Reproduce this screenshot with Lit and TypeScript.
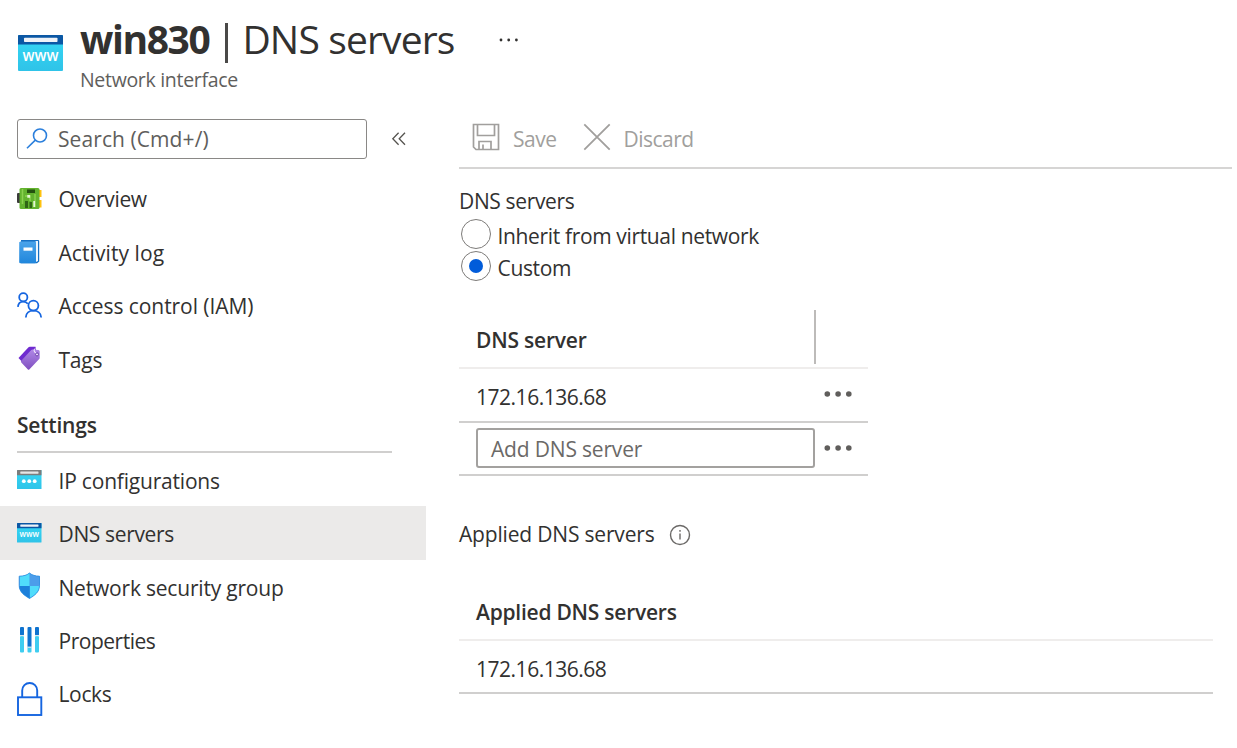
import { LitElement, html, css, svg, nothing, type TemplateResult } from "lit";
import { customElement } from "lit/decorators.js";
import { classMap } from "lit/directives/class-map.js";

const browserIcon = (bar: string, slot: string, body: TemplateResult, size: number) => html`
  <svg width=${size} height=${size * 0.8} viewBox="0 0 45 36">
    <defs>
      <linearGradient id="aqua" x1="0" y1="0" x2="0" y2="1">
        <stop offset="0" stop-color="#35d8f5" /><stop offset="1" stop-color="#2fc3e8" />
      </linearGradient>
    </defs>
    <rect y="0" width="45" height="36" rx="1" fill="url(#aqua)" />
    <path d="M1 0H44a1 1 0 0 1 1 1V9.500H0V1A1 1 0 0 1 1 0Z" fill=${bar} />
    <rect x="6" y="2.8" width="33.5" height="4.2" rx=".8" fill=${slot} />
    ${body}
  </svg>`;

const www = svg`<text x="22.6" y="25.6" text-anchor="middle" textLength="36" lengthAdjust="spacingAndGlyphs"
  font-family="Open Sans, sans-serif" font-weight="600" font-size="16" fill="#fff">www</text>`;
const dots = svg`<g fill="#fff"><circle cx="12.500" cy="20.500" r="3.500"/><circle cx="22.500" cy="20.500" r="3.500"/><circle cx="32.500" cy="20.500" r="3.500"/></g>`;

const icons: Record<string, TemplateResult> = {
  overview: html`<svg width="26" height="24" viewBox="0 0 26 24">
    <rect x="0" y="6" width="4" height="10" rx="1" fill="#3b3b3b" />
    <path d="M21 3h3.500v7H21zM21 13h3.500v7.500H21z" fill="#ffc20e" />
    <rect x="2.500" y="1" width="20" height="21" rx="1.500" fill="#63b32e" />
    <path d="M5.500 2v15M8 9h5v5M18 7v13" stroke="#8bd14f" stroke-width="1.500" fill="none" />
    <rect x="10" y="2.500" width="8" height="3.500" fill="#24510f" />
    <path d="M8 14h3v7H8zM12.500 15h2.500v6h-2.500z" fill="#2f6614" />
    <path d="M16.300 14h1.800v6h-1.800zM10.300 8h2.800v2.800h-2.800z" fill="#e4f7d5" />
  </svg>`,
  log: html`<svg width="26" height="26" viewBox="0 0 26 26">
    <defs><linearGradient id="book" x1="0" y1="0" x2="0" y2="1"><stop offset="0" stop-color="#4ba4ea" /><stop offset="1" stop-color="#1f86dc" /></linearGradient></defs>
    <path d="M4 .900H21.200a1 1 0 0 1 1 1V22.500L20 24.300H4Z" fill="#1670c4" />
    <path d="M18.500 1.900H21V22L18.500 23.200Z" fill="#eef6fd" />
    <path d="M3.500 2.500H18a1 1 0 0 1 1 1V23.300a1 1 0 0 1-1 1H3.500A1.300 1.300 0 0 1 2.200 23V3.200Z" fill="url(#book)" />
    <rect x="6.500" y="8.500" width="9" height="3.200" fill="#fff" />
  </svg>`,
  iam: html`<svg width="26" height="28" viewBox="0 0 26 28" fill="none" stroke="#1565e0" stroke-width="1.800">
    <circle cx="6.300" cy="5.300" r="4.100" /><path d="M.9 14.900C1.200 11.800 3.300 9.600 6.300 9.600c1.900 0 3.500.8 4.500 2.200" />
    <circle cx="16.400" cy="13.600" r="5" /><path d="M8.800 25.500c.2-4.200 3.300-6.800 7.600-6.800s7.500 2.600 7.800 6.800" />
  </svg>`,
  tags: html`<svg width="26" height="26" viewBox="0 0 26 26">
    <defs><linearGradient id="tag" x1="0" y1="0" x2="0" y2="1"><stop offset="0" stop-color="#b088e6" /><stop offset="1" stop-color="#7f4fc0" /></linearGradient></defs>
    <path d="M1.500 12 11.500 1.200Q12 .8 12.700 .8H18.500L19.500 8.500 9 20Z" fill="#6f2bd0" />
    <path d="M4.300 14.800 14.200 4Q14.700 3.500 15.400 3.500L21.500 4Q22.700 4.200 22.700 5.500V11.700Q22.700 12.500 22.200 13L12.300 23.500Q11.600 24.200 10.900 23.500L4.300 16.500Q3.500 15.700 4.300 14.800Z" fill="url(#tag)" />
    <circle cx="20" cy="8.400" r="1.500" fill="#e9ddfa" stroke="#5b2a9e" stroke-width=".8" />
    <path d="M19 7C16.500 5.500 16.500 3 18.500 2.800" stroke="#efe6fb" stroke-width="1.100" fill="none" />
  </svg>`,
  ip: browserIcon("#7c7c7c", "#e6e6e6", dots, 24.5),
  dns: browserIcon("#0b57a4", "#eef2f7", www, 24.5),
  nsg: html`<svg width="26" height="28" viewBox="0 0 26 28">
    <defs><clipPath id="shield"><path d="M12.500 1C15 3.200 18.500 4.100 22.500 4.200V13.500C22.500 20 17.500 23.500 12.500 26.500 7.500 23.500 2.200 20 2.200 13.500V4.200C6.500 4.100 10 3.200 12.500 1Z" /></clipPath></defs>
    <g clip-path="url(#shield)">
      <rect width="26" height="28" fill="#3b9bea" />
      <rect x="3" y="0" width="9.700" height="14" fill="#50dcfb" /><rect x="12.700" y="14" width="13" height="14" fill="#50dcfb" />
      <rect x="0" y="14" width="12.700" height="14" fill="#1c80da" /><rect x="12.700" y="0" width="13" height="14" fill="#4c9dea" />
    </g>
    <path d="M12.500 1C15 3.200 18.500 4.100 22.500 4.200V13.500C22.500 20 17.500 23.500 12.500 26.500 7.500 23.500 2.200 20 2.200 13.500V4.200C6.500 4.100 10 3.200 12.500 1Z" fill="none" stroke="#2a8ce0" stroke-width=".8" />
  </svg>`,
  props: html`<svg width="26" height="28" viewBox="0 0 26 28">
    <g fill="#3fcdf0"><rect x="3" y="10" width="4" height="16.500" rx="1" /><rect x="10.500" y="20" width="4" height="6.500" rx="1" /><rect x="18" y="10" width="4" height="16.500" rx="1" /></g>
    <g fill="#0f73cf"><rect x="3" y="1" width="4" height="8.500" rx="1" /><rect x="10.500" y="1" width="4" height="20" rx="1" /><rect x="18" y="1" width="4" height="8.500" rx="1" /></g>
    <g fill="#d8e6ee"><rect x="3" y="9" width="4" height="1.200" /><rect x="10.500" y="20.600" width="4" height="1.200" /><rect x="18" y="9" width="4" height="1.200" /></g>
  </svg>`,
  lock: html`<svg class="lock" width="26" height="36" viewBox="0 0 26 36" fill="none" stroke="#1565e0" stroke-width="1.900">
    <rect x="1" y="16.300" width="23.300" height="17.700" /><path d="M5.200 16V9.500a7.500 7.500 0 0 1 15 0V16" />
  </svg>`,
};

interface Item { icon: string; label: string; fit: string; selected?: boolean }
const general: Item[] = [
  { icon: "overview", label: "Overview", fit: "f-tight" },
  { icon: "log", label: "Activity log", fit: "f-open" },
  { icon: "iam", label: "Access control (IAM)", fit: "f-hair" },
  { icon: "tags", label: "Tags", fit: "f-snug" },
];
const settings: Item[] = [
  { icon: "ip", label: "IP configurations", fit: "f-snug" },
  { icon: "dns", label: "DNS servers", fit: "f-tight", selected: true },
  { icon: "nsg", label: "Network security group", fit: "f-snug" },
  { icon: "props", label: "Properties", fit: "f-tightest" },
  { icon: "lock", label: "Locks", fit: "f-tight" },
];

const more = html`<svg class="more" width="30" height="8" viewBox="0 0 30 8" fill="#605e5c"><circle cx="4.300" cy="4" r="2.800" /><circle cx="15.100" cy="4" r="2.800" /><circle cx="25.800" cy="4" r="2.800" /></svg>`;

@customElement("app-root")
export class AppRoot extends LitElement {
  static styles = css`
    :host { display: block; height: 748px; overflow: hidden; background: #fff; color: #323130; font: 400 21px/28px "Open Sans", "Noto Sans", sans-serif; white-space: nowrap; }
    * { box-sizing: border-box; }
    svg { display: block; flex: none; }
    .f-open { letter-spacing: 0.08px; }
    .f-hair { letter-spacing: -0.06px; }
    .f-snug { letter-spacing: -0.2px; }
    .f-mid { letter-spacing: -0.24px; }
    .f-tight { letter-spacing: -0.35px; }
    .f-tightest { letter-spacing: -0.48px; }

    header { display: flex; height: 119px; padding: 35px 0 0 18px; }
    .heading { margin: -22px 0 0 17px; }
    h1 { display: flex; margin: 0; font-size: 39px; line-height: 52px; font-weight: 400; letter-spacing: -0.85px; }
    h1 b { font-weight: 700; letter-spacing: -1.4px; }
    .bar { width: 3px; height: 40px; margin: 10px 14px 0 16px; background: #4a4948; }
    .sub { margin-top: 2px; font-size: 19.500px; line-height: 26px; letter-spacing: -0.31px; color: #605e5c; }
    .title-more { margin: 4px 0 0 43px; }

    .body { display: flex; }
    nav { width: 426px; flex: none; }
    .search-row { display: flex; align-items: center; height: 40px; padding-left: 17px; }
    .search { display: flex; align-items: center; gap: 10px; width: 350px; height: 40px; padding: 0 0 1px 8px; border: 1.500px solid #8a8886; border-radius: 3px; color: #605e5c; }
    .collapse { margin-left: 24px; }
    .list { padding-top: 13.300px; }
    .item { display: flex; align-items: center; gap: 15.500px; height: 53.400px; padding-left: 17px; }
    .item span { padding-top: 1px; }
    .settings .item span { padding-top: 2.500px; }
    .icon { display: grid; place-items: center start; width: 26px; height: 40px; }
    .lock { margin-top: 8px; }
    .selected { background: #ebeae9; }
    h2 { margin: 0 34px 0 17px; height: 67px; padding-top: 25px; border-bottom: 2px solid #d0cfce; font-size: 21px; line-height: 28px; font-weight: 600; letter-spacing: -0.2px; }

    main { flex: 1; padding-left: 33px; }
    .toolbar { display: flex; height: 50px; width: 773px; padding-left: 13px; border-bottom: 2px solid #d6d5d4; color: #a19f9d; }
    .toolbar span { padding-top: 6px; }
    .toolbar svg { margin-top: 4px; }
    .save { margin: 0 27px 0 13px; letter-spacing: -0.5px; }
    .discard { margin-left: 12px; letter-spacing: -0.5px; }
    .group { margin-top: 18px; height: 32px; }
    .radio { display: flex; gap: 7px; height: 31.500px; padding-left: 1.500px; }
    .radio i { display: grid; place-items: center; width: 30px; height: 30px; border: 1.800px solid #7d7b79; border-radius: 50%; }
    .radio i.on::after { content: ""; width: 14px; height: 14px; border-radius: 50%; background: #015cda; }
    .radio span { padding-top: 3px; }
    .servers { width: 409px; margin-top: 28px; }
    .th { display: grid; grid-template-columns: 357px 1fr; height: 59px; padding-bottom: 3px; border-bottom: 2px solid #efedec; font-weight: 600; }
    .th span { padding: 16px 0 0 17px; border-right: 2px solid #bdbbb9; }
    .tr { display: grid; grid-template-columns: 356px 1fr; height: 53.500px; border-bottom: 2px solid #d0cfce; }
    .tr > span { padding: 13.500px 0 0 17px; }
    .more { margin: 21px 0 0 8px; }
    .field { margin: 5.500px 0 0 17px; width: 339px; height: 40px; padding: 4.500px 0 0 13px; border: 2px solid #a3a19f; border-radius: 3px; color: #6b6967; letter-spacing: -0.18px; }
    .applied { display: flex; align-items: center; gap: 14px; height: 28px; margin-top: 43.500px; }
    .applied span { letter-spacing: -0.18px; }
    .applied svg { margin-top: 2px; }
    .result { width: 754px; margin-top: 34px; }
    .result .th, .result .tr { display: block; }
    .result .th { padding-top: 16px; }
    .result .th span { padding: 0 0 0 17px; border: 0; }
    .result .tr { padding-top: 14px; }
  `;

  private item(i: Item) {
    return html`<div class=${classMap({ item: true, selected: !!i.selected })}>
      <div class="icon">${icons[i.icon] ?? nothing}</div><span class=${i.fit}>${i.label}</span></div>`;
  }

  render() {
    return html`
      <header>
        ${browserIcon("#0b57a4", "#eef2f7", www, 45)}
        <div class="heading">
          <h1><b>win830</b><div class="bar"></div><span>DNS servers</span>
            <svg class="title-more" width="22" height="46" viewBox="0 0 22 46" fill="#323130"><circle cx="3" cy="23" r="1.400" /><circle cx="10.700" cy="23" r="1.400" /><circle cx="18.400" cy="23" r="1.400" /></svg>
          </h1>
          <div class="sub">Network interface</div>
        </div>
      </header>
      <div class="body">
        <nav>
          <div class="search-row">
            <div class="search">
              <svg width="22" height="22" viewBox="0 0 22 22" fill="none" stroke="#2b7fdc" stroke-width="1.600"><circle cx="14" cy="7.500" r="6.500" /><path d="M9.300 12.100 1 20.300" /></svg>
              <span class="f-open">Search (Cmd+/)</span>
            </div>
            <svg class="collapse" width="16" height="16" viewBox="0 0 16 16" fill="none" stroke="#55534f" stroke-width="1.300"><path d="M7.600 1.700 1.800 7.700l5.800 6M14 1.700 8.200 7.700l5.800 6" /></svg>
          </div>
          <div class="list">${general.map((i) => this.item(i))}</div>
          <h2>Settings</h2>
          <div class="settings">${settings.map((i) => this.item(i))}</div>
        </nav>
        <main>
          <div class="toolbar">
            <svg width="28" height="28" viewBox="0 0 28 28" fill="none" stroke="#a19f9d" stroke-width="1.700"><path d="M1.500 1.500H26.500V26.500H4L1.500 24ZM5.500 1.500V12.500H22.500V1.500M7 26.500V18.500H19V26.500M11 21.500V26.500" /></svg>
            <span class="save">Save</span>
            <svg width="28" height="28" viewBox="0 0 28 28" fill="none" stroke="#a19f9d" stroke-width="1.800"><path d="M1.300 1.300 26.700 26.700M26.700 1.300 1.300 26.700" /></svg>
            <span class="discard">Discard</span>
          </div>
          <div class="group f-tight">DNS servers</div>
          <div class="radio"><i></i><span class="f-tight">Inherit from virtual network</span></div>
          <div class="radio"><i class="on"></i><span class="f-tight">Custom</span></div>
          <div class="servers">
            <div class="th"><span class="f-snug">DNS server</span></div>
            <div class="tr"><span class="f-tightest">172.16.136.68</span>${more}</div>
            <div class="tr"><div class="field">Add DNS server</div>${more}</div>
          </div>
          <div class="applied"><span>Applied DNS servers</span>
            <svg width="22" height="22" viewBox="0 0 22 22" fill="none" stroke="#6b6967" stroke-width="1.400"><circle cx="11" cy="11" r="9.500" /><path d="M11 9.500V15.500M11 6V7.800" /></svg>
          </div>
          <div class="result">
            <div class="th"><span class="f-mid">Applied DNS servers</span></div>
            <div class="tr"><span class="f-tightest">172.16.136.68</span></div>
          </div>
        </main>
      </div>`;
  }
}
